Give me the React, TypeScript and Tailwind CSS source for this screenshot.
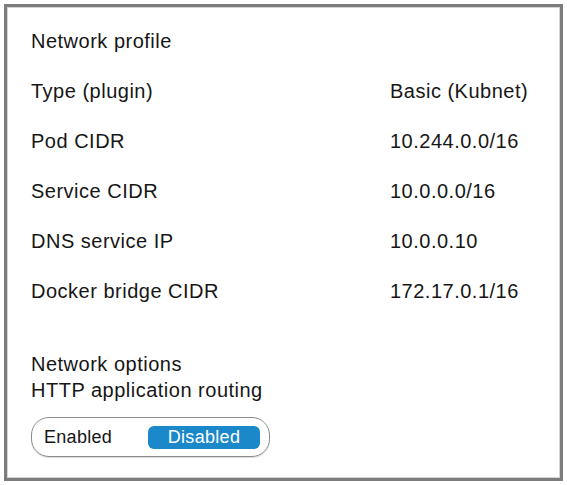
import React from "react";

const rows: [string, string][] = [
  ["Type (plugin)", "Basic (Kubnet)"],
  ["Pod CIDR", "10.244.0.0/16"],
  ["Service CIDR", "10.0.0.0/16"],
  ["DNS service IP", "10.0.0.10"],
  ["Docker bridge CIDR", "172.17.0.1/16"],
];

export default function App() {
  return (
    <div
      className="w-[567px] h-[485px] bg-white p-[4px] text-[#161616]"
      style={{ fontFamily: '"Liberation Sans", Arial, sans-serif' }}
    >
      <div className="h-full border-[3px] border-[#7c7c7c] shadow-[inset_0_0_0_1px_#d4d4d4] pl-[24px] pt-[9px] text-[20px] leading-[26px] tracking-[0.5px]">
        <div className="h-[50px] flex items-center">Network profile</div>
        {rows.map(([k, v]) => (
          <div key={k} className="h-[50px] flex items-center">
            <div className="w-[359px]">{k}</div>
            <div>{v}</div>
          </div>
        ))}
        <div className="mt-[35px]">
          <div>Network options</div>
          <div>HTTP application routing</div>
        </div>
        <div className="mt-[14px] w-[239px] h-[40px] border-[1.5px] border-[#8c8c8c] rounded-[18px] flex items-center pl-[12px] pr-[9px] text-[18px] tracking-[0.3px] shadow-[0_1px_1px_rgba(0,0,0,0.15)]">
          <div className="flex-1">Enabled</div>
          <div className="w-[112px] h-[23px] rounded-[6px] bg-[#1a88c9] text-white flex items-center justify-center leading-[23px]">
            Disabled
          </div>
        </div>
      </div>
    </div>
  );
}
